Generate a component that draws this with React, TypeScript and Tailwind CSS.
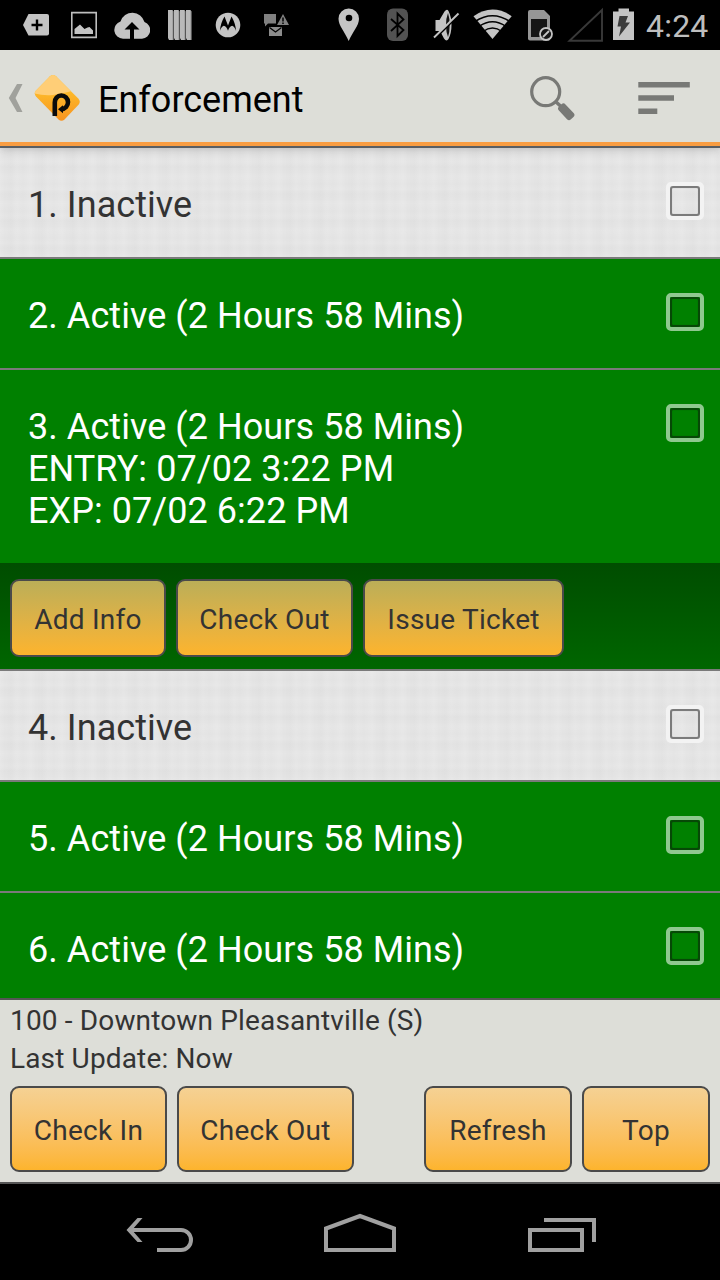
import type { ReactNode } from 'react';
import clsx from 'clsx';

type Space = {
  id: number;
  active: boolean;
  status: string;
  details?: string[];
};

const spaces: Space[] = [
  { id: 1, active: false, status: 'Inactive' },
  { id: 2, active: true, status: 'Active (2 Hours 58 Mins)' },
  {
    id: 3,
    active: true,
    status: 'Active (2 Hours 58 Mins)',
    details: ['ENTRY: 07/02 3:22 PM', 'EXP: 07/02 6:22 PM'],
  },
  { id: 4, active: false, status: 'Inactive' },
  { id: 5, active: true, status: 'Active (2 Hours 58 Mins)' },
  { id: 6, active: true, status: 'Active (2 Hours 58 Mins)' },
];

const StatusBar = () => (
  <div className="flex h-[50px] shrink-0 items-center bg-black">
    <svg className="ml-[23px]" width="26" height="50" viewBox="23 0 26 50">
      <path d="M28.5 14H47a2 2 0 0 1 2 2v17.500a2 2 0 0 1-2 2H28.500L23 25z" fill="#c4c4c4" />
      <path d="M37 19.500v11M31.500 25h11" stroke="#000" strokeWidth="2.400" />
    </svg>
    <svg className="ml-[22px]" width="26" height="50" viewBox="71 0 26 50">
      <path d="M71.700 12.700h24.600v24.600h-24.600z" fill="none" stroke="#bdbdbd" strokeWidth="1.800" />
      <path d="M74.500 34v-5l5.500-4.500 4.500 4.500 3-1.500 2-.5 3.500 3.500V34z" fill="#c4c4c4" />
    </svg>
    <svg className="ml-[17px]" width="36" height="50" viewBox="114 0 36 50">
      <path d="M123 38.700a8.800 8.800 0 0 1-2.500-17.200A12.500 12.500 0 0 1 144.500 22a8.600 8.600 0 0 1-2.500 16.700z" fill="#c4c4c4" />
      <path d="M132 22l7.500 7.500H134V39h-4v-9.500h-5.500z" fill="#000" />
    </svg>
    <svg className="ml-[18px]" width="24" height="50" viewBox="168 0 24 50">
      {[168, 174, 180, 186].map((x) => (
        <g key={x}>
          <path d={`M${x} 10h4.500l1 2v28h-4.500l-1-2z`} fill="#b9b9b9" />
          <path d={`M${x + 5.300} 11v29`} stroke="#555" strokeWidth="1" />
        </g>
      ))}
    </svg>
    <svg className="ml-[23px]" width="26" height="50" viewBox="215 0 26 50">
      <circle cx="228" cy="25" r="12.300" fill="#c4c4c4" />
      <path
        d="M224.500 16.500l3.500 9 3.500-9c2.500 4 4.200 9 4.600 14.500-.8-2.600-2-4.600-3.900-5.300-1.800.4-3.200 2-4.200 5-1-3-2.400-4.600-4.200-5-1.900.7-3.100 2.700-3.900 5.300.4-5.500 2.100-10.500 4.600-14.500z"
        fill="#000"
      />
    </svg>
    <svg className="ml-[22px]" width="27" height="50" viewBox="263 0 27 50">
      <path d="M264 14h12v9.500h-8l-3 3v-3h-1z" fill="#808080" />
      <path d="M283 14l6 11h-12z" fill="#808080" />
      <path d="M283 17.500v4M283 22.500v1.500" stroke="#000" strokeWidth="1.500" />
      <path d="M269 27h13v9h-13z" fill="#8c8c8c" />
      <path d="M269.500 27.500l6 4.500 6-4.500" fill="none" stroke="#000" strokeWidth="1.300" />
    </svg>
    <svg className="ml-[48px]" width="22" height="50" viewBox="338 0 22 50">
      <path
        d="M348.700 8.500A10.200 10.200 0 0 1 359 18.700c0 7-6.500 13-10.300 22.300-3.800-9.300-10.200-15.300-10.200-22.300A10.200 10.200 0 0 1 348.700 8.500z"
        fill="#c4c4c4"
      />
      <circle cx="349" cy="18" r="3.300" fill="#000" />
    </svg>
    <svg className="ml-[27px]" width="22" height="50" viewBox="387 0 22 50">
      <rect x="387" y="8.500" width="21" height="32.500" rx="6" fill="#525252" />
      <path d="M391 19l12.500 11-6 6V13.500l6 6L391 31" fill="none" stroke="#000" strokeWidth="1.800" />
    </svg>
    <svg className="ml-[23px]" width="28" height="50" viewBox="432 0 28 50">
      <path d="M435.500 20h4l5-8.500q2.500-3 4-.5 3 6 3 14t-3 14q-2 3-4.500-.5L440 31h-4.500z" fill="#c4c4c4" />
      <path d="M448 13q-2 5-2 12t2 12q1.700-5 1.700-12t-1.700-12z" fill="#111" />
      <path d="M435 38.500l25-25" stroke="#000" strokeWidth="2" />
      <path d="M434 37.500l24.500-24" stroke="#c4c4c4" strokeWidth="1.900" />
    </svg>
    <svg className="ml-[13px]" width="40" height="50" viewBox="473 0 40 50">
      <path d="M473.500 16.200Q492.500 3 511.700 16.200L492.500 39z" fill="#c4c4c4" />
      <path
        d="M475 21.500q17.500-11.500 35 0M479 26.500q13.500-9.500 27 0M483 31.500q9.500-7 19 0"
        fill="none"
        stroke="#000"
        strokeWidth="1.500"
      />
    </svg>
    <svg className="ml-[15px]" width="26" height="50" viewBox="528 0 26 50">
      <path d="M530 10h14l6 6v23a1.500 1.500 0 0 1-1.500 1.500H530a2 2 0 0 1-2-2V12a2 2 0 0 1 2-2z" fill="#969696" />
      <path d="M531 19h16v18h-16z" fill="#151515" />
      <circle cx="546" cy="34" r="6" fill="#151515" stroke="#c4c4c4" strokeWidth="1.800" />
      <path d="M543 37l6-6" stroke="#c4c4c4" strokeWidth="1.800" />
    </svg>
    <svg className="ml-[13px]" width="36" height="50" viewBox="567 0 36 50">
      <path d="M569.500 40.800H602V10z" fill="none" stroke="#393939" strokeWidth="1.900" />
    </svg>
    <svg className="ml-[10px]" width="22" height="50" viewBox="613 0 22 50">
      <path d="M618.500 8.500h10.500v3h5V40h-21V11.500h5.500z" fill="#c4c4c4" />
      <path d="M619.500 16h8.500l-2.500 6.500h4.500L619 36.500l2-10h-3.500z" fill="#3b3b3b" />
    </svg>
    <span className="ml-[11px] whitespace-nowrap pt-0.5 text-[32px] leading-[48px] tracking-[0.2px] text-[#bebebe]">4:24</span>
  </div>
);

const Header = () => (
  <header className="relative z-10 flex h-[98px] shrink-0 items-center border-b-2 border-[#5a5e63] bg-[#dddeD8] shadow-[inset_0_-4px_0_#f99d42,0_2px_8px_rgba(0,0,0,0.18)]">
    <svg className="ml-2" width="15" height="96" viewBox="8 50 15 96">
      <path d="M17 84h5.500l-7 14 7 14H17l-8.200-14z" fill="#a0a19c" />
    </svg>
    <svg className="ml-[11px]" width="48" height="96" viewBox="34 50 48 96">
      <defs>
        <linearGradient id="logo" x1="0" y1="0" x2="0" y2="1">
          <stop offset="0.300" stopColor="#fdbd2b" />
          <stop offset="1" stopColor="#f8941f" />
        </linearGradient>
      </defs>
      <path
        d="M50 76.300q3-2.500 6 0l22.500 22.500q2.500 3 0 6L64.500 119.500q-3 2.500-6 0L36 96.500q-2.500-3 0-6z"
        fill="url(#logo)"
      />
      <path d="M50 76.300q3-2.500 6 0L71 91.300Q60 94 53 95q-9 1-18.500-1.500 0-1.500 1.500-3z" fill="#ffce77" />
      <path
        d="M54.800 116v-13.500a6.600 6.800 0 1 1 6.700 6.600"
        fill="none"
        stroke="#0b0b0b"
        strokeWidth="4.600"
      />
      <path d="M58 109.200l5-4v8z" fill="#0b0b0b" />
    </svg>
    <h1 className="ml-[16px] whitespace-nowrap pt-[3px] text-[36px] leading-[42px] text-black">Enforcement</h1>
    <svg className="ml-auto" width="48" height="96" viewBox="528 50 48 96">
      <circle cx="545.700" cy="91.700" r="14" fill="none" stroke="#787976" strokeWidth="3.200" />
      <path d="M555.500 101.500l5.500 5" stroke="#787976" strokeWidth="3.500" />
      <rect x="557.500" y="107.300" width="17.500" height="9" rx="2.800" fill="#787976" transform="rotate(47 566.250 111.800)" />
    </svg>
    <svg className="ml-[62px] mr-[30px]" width="52" height="96" viewBox="638 50 52 96">
      <path d="M638.300 82h51.500v5.500h-51.500zM638.300 95.300H674v5.500h-35.700zM638.300 108.500h19v5.500h-19z" fill="#787976" />
    </svg>
  </header>
);

const Button = ({ className, children }: { className: string; children: ReactNode }) => (
  <button
    className={clsx(
      'shrink-0 whitespace-nowrap rounded-[9px] border-2 border-[#4a4a4a] bg-linear-to-b to-[#fdb42c] pt-1 text-center text-[28px] tracking-[0.25px] text-[#333]',
      className,
    )}
  >
    {children}
  </button>
);

const Checkbox = ({ active }: { active: boolean }) => (
  <span
    className={clsx(
      'mt-[34px] mr-4 size-[38px] shrink-0 rounded-[5px] border-4',
      active ? 'border-[#8fc88f]' : 'border-[#f3f3f3]',
    )}
  >
    <span
      className={clsx(
        'block size-full rounded-[3px] border-2',
        active ? 'border-[#064806] shadow-[inset_0_0_1px_#054f05]' : 'border-[#7b7b7b] shadow-[inset_0_0_1px_#aaa]',
      )}
    />
  </span>
);

const linen =
  'bg-[#e3e3e3] bg-[repeating-linear-gradient(90deg,rgba(255,255,255,0.12)_0px,transparent_5px,rgba(0,0,0,0.008)_11px,rgba(255,255,255,0.08)_17px,transparent_23px,rgba(255,255,255,0.12)_31px),repeating-linear-gradient(0deg,rgba(255,255,255,0.1)_0px,transparent_4px,rgba(0,0,0,0.006)_9px,rgba(255,255,255,0.08)_14px,transparent_19px,rgba(255,255,255,0.1)_27px)]';

const SpaceRow = ({ space }: { space: Space }) => (
  <li className="shrink-0 border-b-2 border-[#7a7a7a]">
    <div
      className={clsx(
        'flex items-start justify-between pl-7',
        space.details ? 'h-[193px]' : 'h-[109px]',
        space.active ? 'bg-[#008000] text-white' : linen,
        !space.active && 'text-[#333]',
      )}
    >
      <div className="whitespace-nowrap pt-9 text-[36px] leading-[42px] tracking-[0.06px]">
        <p>{space.id}. {space.status}</p>
        {space.details?.map((line) => <p key={line}>{line}</p>)}
      </div>
      <Checkbox active={space.active} />
    </div>
    {space.details && (
      <div className="flex h-[106px] gap-2.5 bg-linear-to-b from-[#004d00] to-[#006600] px-2.5 pt-4">
        <Button className="h-[78px] w-[156px] from-[#bbae57]">Add Info</Button>
        <Button className="h-[78px] w-[177px] from-[#bbae57]">Check Out</Button>
        <Button className="h-[78px] w-[201px] from-[#bbae57]">Issue Ticket</Button>
      </div>
    )}
  </li>
);

const Footer = () => (
  <footer className="h-[186px] shrink-0 border-y-2 border-[#555] bg-[#dddeD8] px-2.5 text-[#333]">
    <div className="whitespace-nowrap pt-0.5 text-[28px] leading-[38px] tracking-[0.15px]">
      <p>100 - Downtown Pleasantville (S)</p>
      <p>Last Update: Now</p>
    </div>
    <div className="mt-2 flex gap-2.5">
      <Button className="h-[86px] w-[157px] from-[#f5d193]">Check In</Button>
      <Button className="h-[86px] w-[177px] from-[#f5d193]">Check Out</Button>
      <Button className="ml-auto h-[86px] w-[148px] from-[#f5d193]">Refresh</Button>
      <Button className="h-[86px] w-[128px] from-[#f5d193]">Top</Button>
    </div>
  </footer>
);

const NavBar = () => (
  <nav className="flex h-24 shrink-0 items-center bg-black">
    <svg className="ml-[126px]" width="68" height="96" viewBox="126 1184 68 96">
      <path d="M137.500 1218h5l-10.500 12 10.500 12h-5l-11-12z" fill="#a0a0a0" />
      <path d="M130 1230h51a10 10 0 0 1 0 20h-24" fill="none" stroke="#a0a0a0" strokeWidth="4" />
    </svg>
    <svg className="ml-[130px]" width="72" height="96" viewBox="324 1184 72 96">
      <path d="M326 1250v-21.500l34-12.500 34 12.500V1250z" fill="none" stroke="#a0a0a0" strokeWidth="4" />
    </svg>
    <svg className="ml-[132px]" width="68" height="96" viewBox="528 1184 68 96">
      <path d="M530 1230h52v20h-52zM544 1220h50v22" fill="none" stroke="#a0a0a0" strokeWidth="4" />
    </svg>
  </nav>
);

export default function App() {
  return (
    <div className="flex h-[1280px] w-[720px] flex-col overflow-hidden bg-black font-[Roboto,sans-serif]">
      <StatusBar />
      <Header />
      <ul className="flex h-[850px] shrink-0 flex-col overflow-hidden">
        {spaces.map((space) => <SpaceRow key={space.id} space={space} />)}
      </ul>
      <Footer />
      <NavBar />
    </div>
  );
}
